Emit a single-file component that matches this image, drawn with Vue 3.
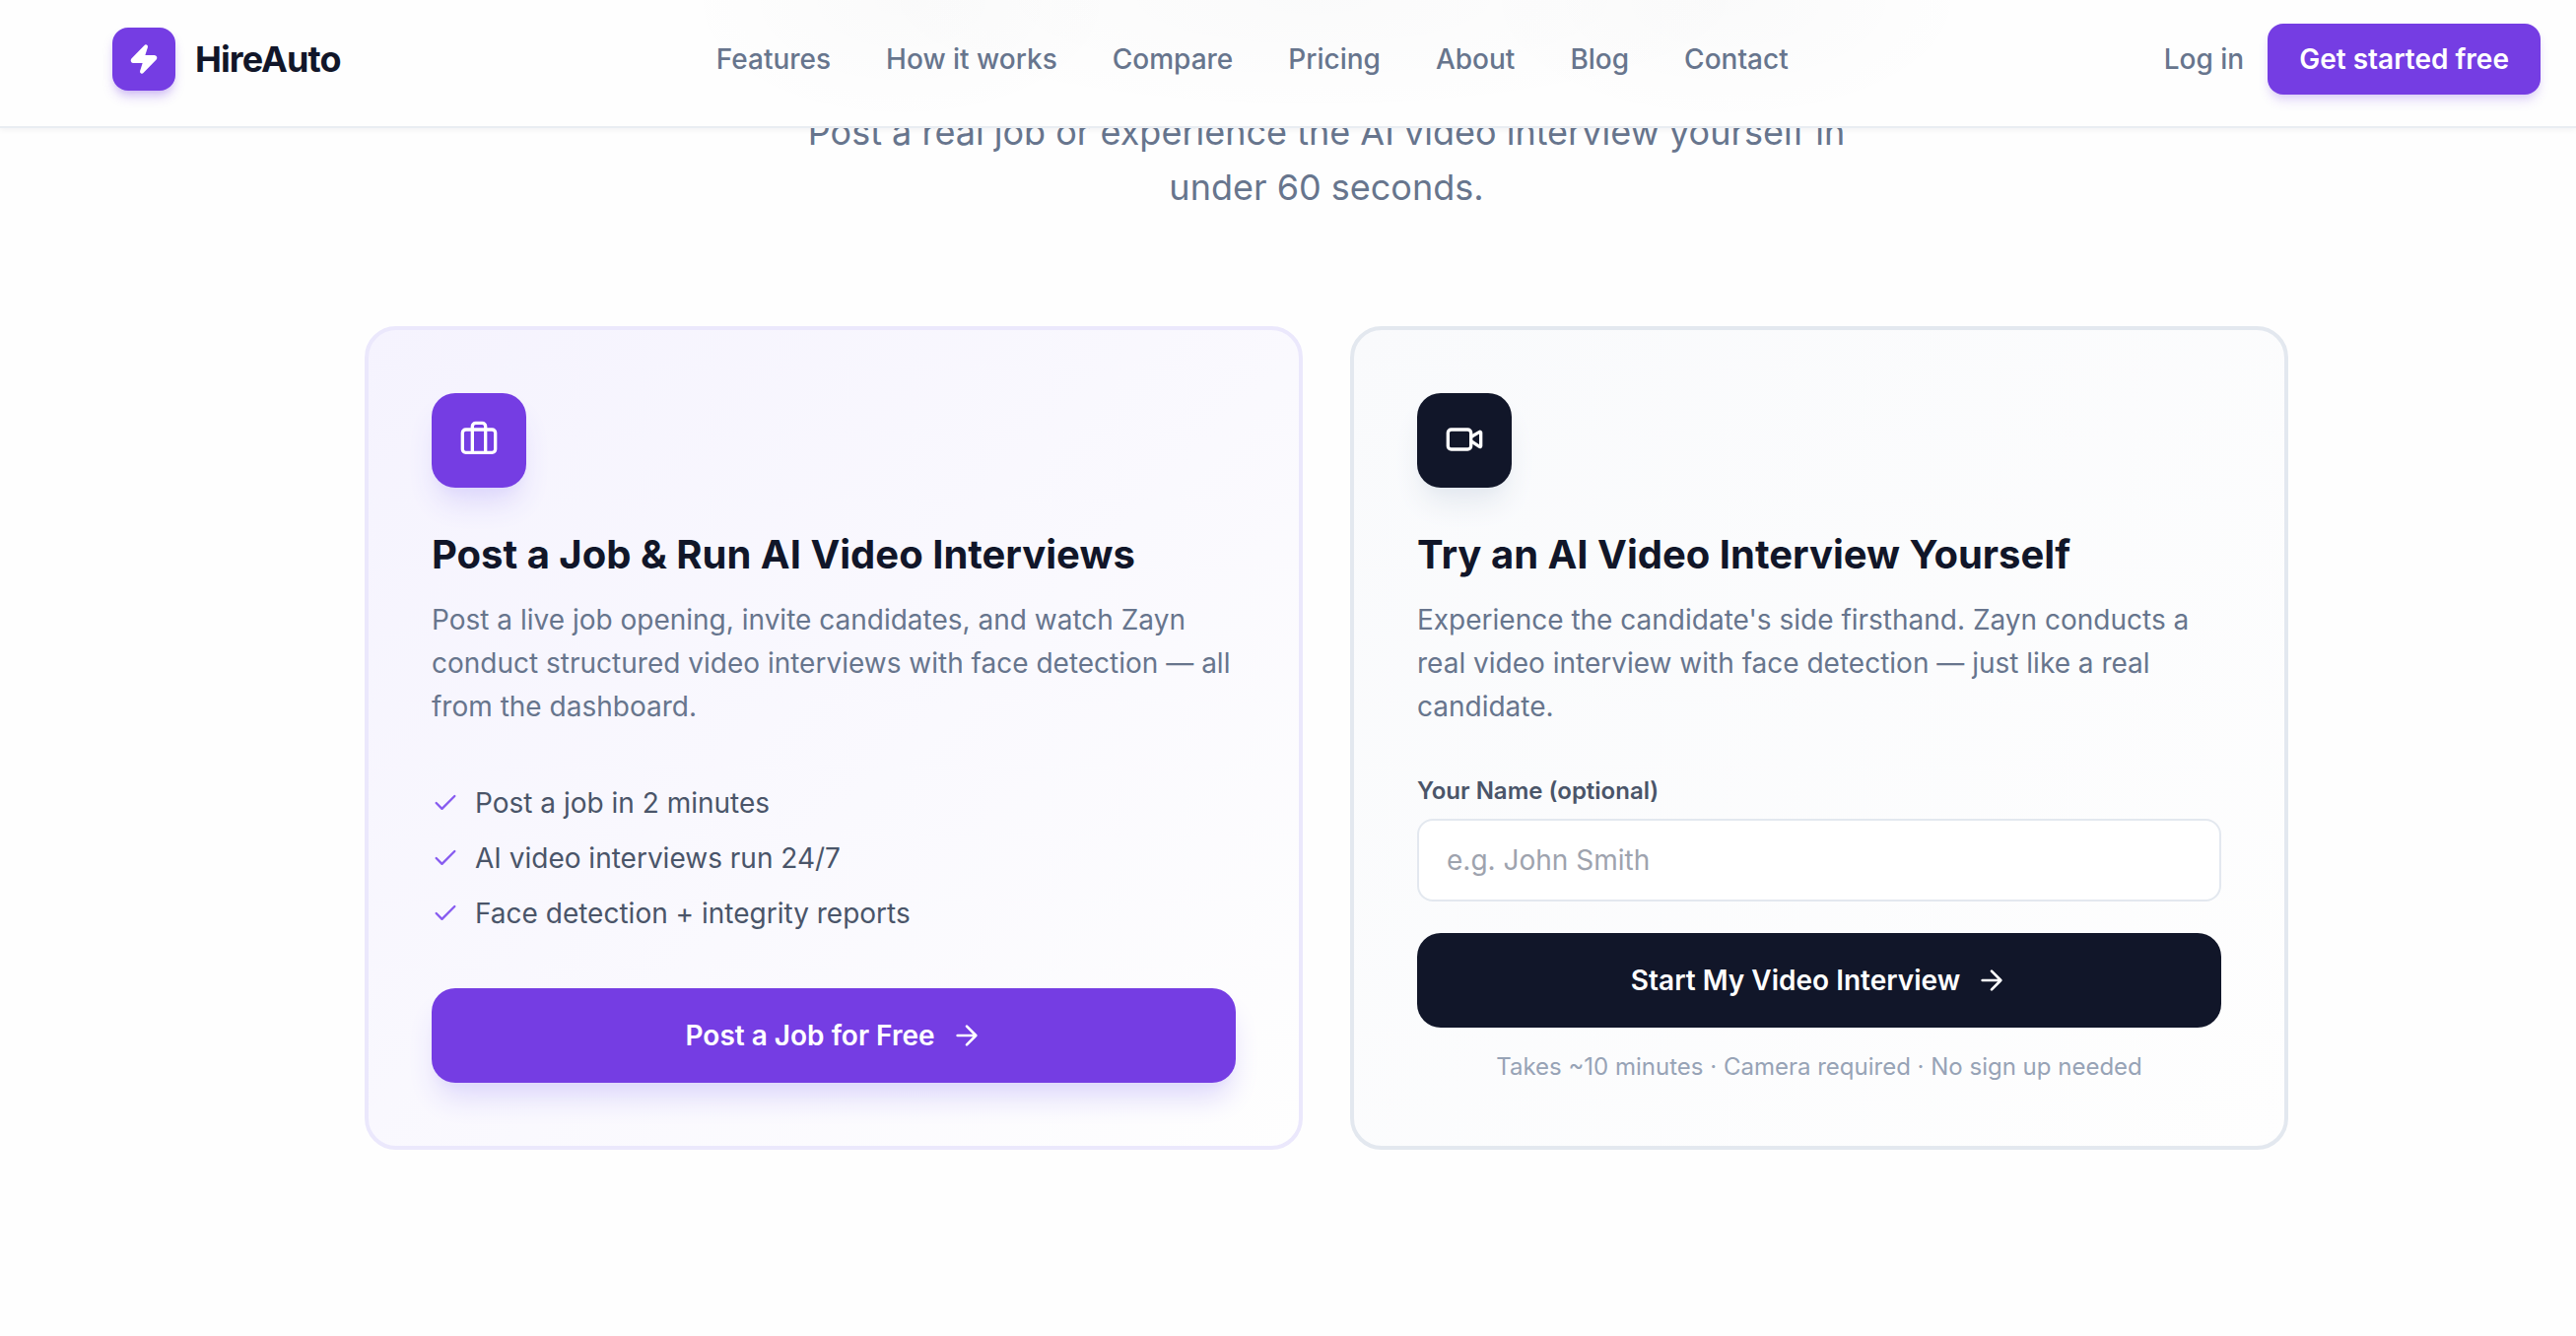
<template>
  <div class="page">
    <header class="site-header">
      <a href="#" class="brand">
        <span class="brand-mark">
          <svg class="icon-md" viewBox="0 0 24 24" aria-hidden="true">
            <path d="M4 14a1 1 0 0 1-.78-1.63l9.9-10.2a.5.5 0 0 1 .86.46l-1.92 6.02A1 1 0 0 0 13 10h7a1 1 0 0 1 .78 1.63l-9.9 10.2a.5.5 0 0 1-.86-.46l1.92-6.02A1 1 0 0 0 11 14z" />
          </svg>
        </span>
        <span class="brand-name">HireAuto</span>
      </a>

      <nav class="main-nav">
        <a v-for="link in navLinks" :key="link" href="#">{{ link }}</a>
      </nav>

      <div class="header-actions">
        <a href="#" class="login">Log in</a>
        <button type="button" class="btn-small">Get started free</button>
      </div>
    </header>

    <main class="try-section">
      <p class="subtitle">Post a real job or experience the AI video interview yourself in under 60 seconds.</p>

      <div class="cards">
        <section class="card card-job">
          <div class="tile tile-purple">
            <svg class="icon-lg" viewBox="0 0 24 24" aria-hidden="true">
              <path d="M16 20V4a2 2 0 0 0-2-2h-4a2 2 0 0 0-2 2v16" />
              <rect x="2" y="6" width="20" height="14" rx="2" />
            </svg>
          </div>
          <h3>Post a Job &amp; Run AI Video Interviews</h3>
          <p class="desc">
            Post a live job opening, invite candidates, and watch Zayn conduct structured video
            interviews with face detection — all from the dashboard.
          </p>
          <ul class="features">
            <li v-for="feature in features" :key="feature">
              <svg class="icon-sm" viewBox="0 0 24 24" aria-hidden="true">
                <path d="M20 6 9 17l-5-5" />
              </svg>
              {{ feature }}
            </li>
          </ul>
          <button type="button" class="btn btn-purple">
            Post a Job for Free
            <svg class="icon-md" viewBox="0 0 24 24" aria-hidden="true">
              <path d="M5 12h14M12 5l7 7-7 7" />
            </svg>
          </button>
        </section>

        <section class="card card-demo">
          <div class="tile tile-dark">
            <svg class="icon-lg" viewBox="0 0 24 24" aria-hidden="true">
              <path d="m16 13 5.223 3.482a.5.5 0 0 0 .777-.416V7.87a.5.5 0 0 0-.752-.432L16 10.5" />
              <rect x="2" y="6" width="14" height="12" rx="2" />
            </svg>
          </div>
          <h3>Try an AI Video Interview Yourself</h3>
          <p class="desc">
            Experience the candidate's side firsthand. Zayn conducts a real video interview with
            face detection — just like a real candidate.
          </p>
          <form @submit.prevent>
            <label for="candidate-name">Your Name (optional)</label>
            <input id="candidate-name" v-model="name" type="text" placeholder="e.g. John Smith" />
            <button type="submit" class="btn btn-dark">
              Start My Video Interview
              <svg class="icon-md" viewBox="0 0 24 24" aria-hidden="true">
                <path d="M5 12h14M12 5l7 7-7 7" />
              </svg>
            </button>
            <p class="note">Takes ~10 minutes · Camera required · No sign up needed</p>
          </form>
        </section>
      </div>
    </main>
  </div>
</template>

<script setup>
import { ref } from 'vue'

const name = ref('')

const navLinks = ['Features', 'How it works', 'Compare', 'Pricing', 'About', 'Blog', 'Contact']

const features = [
  'Post a job in 2 minutes',
  'AI video interviews run 24/7',
  'Face detection + integrity reports'
]
</script>

<style>
body {
  margin: 0;
  background: #fefefe;
}
</style>

<style scoped>
.page {
  font-family: Inter, "Liberation Sans", sans-serif;
  font-size: 28px;
  line-height: 40px;
  color: #111629;
}
.page * {
  box-sizing: border-box;
}
a {
  color: inherit;
  text-decoration: none;
}
button,
input {
  font: inherit;
}
h3,
p,
ul {
  margin: 0;
  padding: 0;
}
svg {
  flex-shrink: 0;
  fill: none;
  stroke: currentColor;
  stroke-width: 2;
  stroke-linecap: round;
  stroke-linejoin: round;
}
.icon-sm {
  width: 28px;
  height: 28px;
}
.icon-md {
  width: 32px;
  height: 32px;
}
.icon-lg {
  width: 40px;
  height: 40px;
}

/* header */
.site-header {
  position: sticky;
  top: 0;
  z-index: 10;
  display: flex;
  align-items: center;
  justify-content: space-between;
  padding: 24px 36px 32px 114px;
  border-bottom: 2px solid #e9edf2;
  background:
    radial-gradient(ellipse 230px 130px at 35% 0, rgba(15, 23, 42, 0.015), transparent),
    radial-gradient(ellipse 480px 120px at 51% 0, rgba(15, 23, 42, 0.015), transparent),
    radial-gradient(ellipse 260px 130px at 67% 0, rgba(15, 23, 42, 0.015), transparent),
    #fefefe;
  box-shadow: 0 2px 6px rgba(15, 23, 42, 0.05);
}
.brand {
  display: flex;
  align-items: center;
  gap: 20px;
}
.brand-mark {
  display: flex;
  align-items: center;
  justify-content: center;
  width: 64px;
  height: 64px;
  border-radius: 16px;
  background: #753de3;
  color: #fff;
  box-shadow: 0 8px 12px -2px rgba(117, 61, 227, 0.25), 0 4px 8px -4px rgba(117, 61, 227, 0.25);
}
.brand-mark svg {
  fill: currentColor;
}
.brand-name {
  font-size: 36px;
  font-weight: 700;
  letter-spacing: -0.025em;
}
.main-nav {
  display: flex;
  gap: 56px;
  font-weight: 500;
  color: #67758d;
}
.header-actions {
  display: flex;
  align-items: center;
  gap: 24px;
}
.login {
  font-weight: 500;
  color: #67758d;
}
.btn-small {
  padding: 16px 32px;
  border: 0;
  border-radius: 16px;
  background: #753de3;
  color: #fff;
  font-weight: 600;
  cursor: pointer;
  box-shadow: 0 8px 12px -2px rgba(117, 61, 227, 0.18), 0 4px 8px -4px rgba(117, 61, 227, 0.18);
}

/* intro and cards */
.try-section {
  padding: 0 0 188px 78px;
}
.subtitle {
  max-width: 1152px;
  margin: -24px auto 0;
  font-size: 36px;
  line-height: 56px;
  text-align: center;
  color: #67758d;
}
.cards {
  display: grid;
  grid-template-columns: 1fr 1fr;
  gap: 48px;
  max-width: 1952px;
  margin: 113px auto 0;
}
.card {
  display: flex;
  flex-direction: column;
  padding: 64px;
  border: 4px solid;
  border-radius: 32px;
}
.card-job {
  border-color: #ebe8fc;
  background: linear-gradient(135deg, #f5f3fe, #fefefe);
}
.card-demo {
  border-color: #e3e8ef;
  background: linear-gradient(135deg, #f9fafc, #fefefe);
}
.tile {
  display: flex;
  align-items: center;
  justify-content: center;
  width: 96px;
  height: 96px;
  padding-bottom: 2px;
  border-radius: 24px;
  color: #fff;
}
.tile-purple {
  background: #753de3;
  box-shadow: 0 20px 30px -6px #ddd7fb, 0 8px 12px -8px #ddd7fb;
}
.tile-dark {
  background: #111629;
  box-shadow: 0 20px 30px -6px #e3e8ef, 0 8px 12px -8px #e3e8ef;
}
h3 {
  margin-top: 40px;
  font-size: 40px;
  font-weight: 700;
  line-height: 56px;
}
.desc {
  margin-top: 16px;
  line-height: 44px;
  color: #67758d;
}
.features {
  display: flex;
  flex-direction: column;
  gap: 16px;
  margin: 56px 0;
  list-style: none;
  color: #4a5569;
}
.features li {
  display: flex;
  align-items: center;
  gap: 16px;
}
.features svg {
  color: #875bf0;
}
.btn {
  display: flex;
  align-items: center;
  justify-content: center;
  gap: 16px;
  width: 100%;
  height: 96px;
  border: 0;
  border-radius: 24px;
  color: #fff;
  font-weight: 600;
  cursor: pointer;
}
.btn-purple {
  background: #753de3;
  box-shadow: 0 20px 30px -6px #ddd7fb, 0 8px 12px -8px #ddd7fb;
}
.btn-dark {
  background: #111629;
}
form {
  margin-top: 48px;
}
label {
  display: block;
  font-size: 24px;
  font-weight: 600;
  line-height: 32px;
  color: #4a5569;
}
input {
  display: block;
  width: 100%;
  height: 84px;
  margin: 12px 0 32px;
  padding: 0 28px;
  border: 2px solid #e3e8ef;
  border-radius: 16px;
  background: #fff;
  color: #111629;
}
input::placeholder {
  color: #9ea3ae;
}
.note {
  margin-top: 24px;
  font-size: 24px;
  line-height: 32px;
  text-align: center;
  color: #97a3b6;
}
</style>
